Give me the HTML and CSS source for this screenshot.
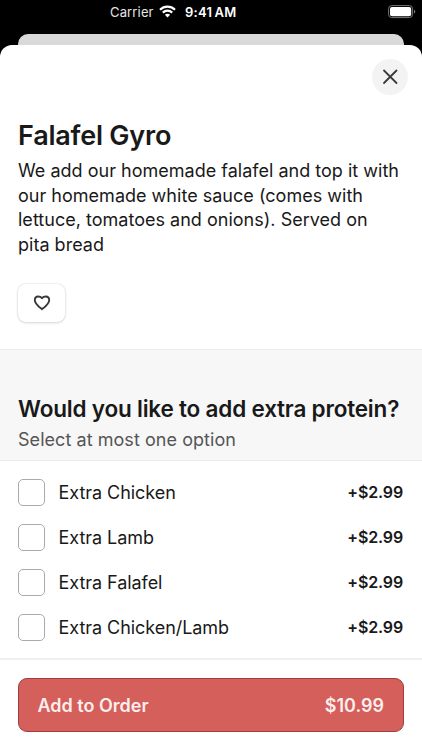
FILE: index.html
```html
<!DOCTYPE html>
<html lang="en">
<head>
<meta charset="utf-8">
<title>Falafel Gyro</title>
<link rel="stylesheet" href="styles.css">
</head>
<body>
<div class="screen">
  <header class="status">
    <span class="carrier">Carrier</span>
    <svg class="wifi" width="17" height="13" viewBox="0 0 17 13" fill="none" stroke="#fff" stroke-width="2.2"><path d="M1 4.8C5.2.6 11.8.6 16 4.8M3.8 7.6c2.7-2.6 6.7-2.6 9.4 0"/><path d="M5.900 9.800c1.500-1.300 3.700-1.300 5.200 0l-2.600 2.700z" fill="#fff" stroke="none"/></svg>
    <span class="time">9:41 AM</span>
    <svg class="battery" width="28" height="14" viewBox="0 0 28 14"><rect x=".6" y=".6" width="24" height="12" rx="3.2" fill="none" stroke="#777"/><rect x="2" y="2" width="21.2" height="9.2" rx="2" fill="#fff"/><path d="M26 4.700c1.800.7 1.800 3.100 0 3.800z" fill="#777"/></svg>
  </header>
  <div class="back-card"></div>
  <main class="sheet">
    <section class="item">
      <button class="close" aria-label="Close"><svg width="36" height="36" viewBox="0 0 36 36" fill="none" stroke="#3a3a3a" stroke-width="1.8" stroke-linecap="round"><path d="M12 11.500l12.500 12.500M24.500 11.500L12 24"/></svg></button>
      <h1>Falafel Gyro</h1>
      <p class="description">We add our homemade falafel and top it with<br>our homemade white sauce (comes with<br>lettuce, tomatoes and onions). Served on<br>pita bread</p>
      <button class="favorite" aria-label="Favorite"><svg width="18" height="16" viewBox="0 0 18 16" fill="none" stroke="#3a3a3a" stroke-width="1.900" stroke-linejoin="round"><path d="M9 14.200C6.100 11.900 1.800 8.900 1.800 5.200C1.800 2.900 3.300 1.500 5.200 1.500C6.900 1.500 8.200 2.200 9 3.200C9.800 2.200 11.100 1.500 12.800 1.500C14.700 1.500 16.200 2.900 16.200 5.200C16.200 8.900 11.900 11.900 9 14.200Z"/></svg></button>
    </section>
    <section class="group">
      <h2>Would you like to add extra protein?</h2>
      <p class="hint">Select at most one option</p>
    </section>
    <section class="options">
      <label class="option"><input type="checkbox"><span class="name">Extra Chicken</span><span class="price">+$2.99</span></label>
      <label class="option"><input type="checkbox"><span class="name">Extra Lamb</span><span class="price">+$2.99</span></label>
      <label class="option"><input type="checkbox"><span class="name">Extra Falafel</span><span class="price">+$2.99</span></label>
      <label class="option"><input type="checkbox"><span class="name">Extra Chicken/Lamb</span><span class="price">+$2.99</span></label>
    </section>
    <footer class="bar">
      <button class="add"><span class="add-label">Add to Order</span><span class="total">$10.99</span></button>
    </footer>
  </main>
</div>
</body>
</html>
```
FILE: styles.css
```css
* { box-sizing: border-box; }
body, h1, h2, p { margin: 0; }
body { background: #000; font-family: Inter, "Liberation Sans", sans-serif; color: #191919; }
button { font: inherit; padding: 0; border: 0; }
span, h1, h2, p { white-space: nowrap; }
.screen { height: 750px; display: flex; flex-direction: column; overflow: hidden; }
.status { height: 34px; flex: none; display: flex; align-items: flex-start; padding: 4px 6px 0 110px; color: #fff; font-size: 13px; line-height: 16px; }
.carrier { width: 49px; letter-spacing: .15px; color: #e6e6e6; }
.wifi { margin-top: 1px; }
.time { margin-left: 9px; font-weight: 600; letter-spacing: .3px; word-spacing: -1.5px; }
.battery { margin-left: auto; margin-top: 1px; }
.back-card { height: 11px; flex: none; margin: 0 18px; border-radius: 10px 10px 0 0; background: #d9d9d9; }
.sheet { height: 705px; flex: none; display: flex; flex-direction: column; border-radius: 12px 12px 0 0; background: #fff; }
.item { height: 304px; padding: 14px 18px 0; display: flex; flex-direction: column; align-items: flex-start; }
.close { width: 36px; height: 36px; border-radius: 50%; background: #f3f3f3; align-self: flex-end; margin-right: -4px; }
.close svg, .favorite svg { display: block; }
h1 { margin-top: 24px; font-size: 27px; line-height: 34px; font-weight: 600; letter-spacing: -.22px; }
.description { margin-top: 6px; font-size: 18px; line-height: 24.7px; letter-spacing: .015px; }
.favorite { width: 47px; height: 38px; margin-top: 26px; border-radius: 8px; background: #fff; box-shadow: 0 0 2px rgba(0,0,0,.16), 0 1px 3px rgba(0,0,0,.12); display: flex; align-items: center; justify-content: center; }
.group { height: 112px; padding: 45px 18px 0; background: #f7f7f7; border-top: 1px solid #ececec; border-bottom: 1px solid #ececec; }
h2 { font-size: 22.5px; line-height: 28px; font-weight: 600; letter-spacing: -.19px; }
.hint { margin-top: 4px; font-size: 18px; line-height: 25px; letter-spacing: .05px; color: #555; }
.options { height: 197px; padding: 9px 19px 0 18px; }
.option { height: 45px; display: flex; align-items: center; }
.option input { appearance: none; width: 27px; height: 27px; margin: 0 13.500px 0 0; border: 1px solid #aaa; border-radius: 5px; background: #fff; }
.name { font-size: 18px; line-height: 24px; letter-spacing: -.05px; }
.price { margin-left: auto; font-size: 16px; font-weight: 600; line-height: 24px; letter-spacing: -.15px; position: relative; top: -1px; }
.bar { height: 92px; padding: 18px 18px; border-top: 2px solid #f0f0f0; }
.add { width: 100%; height: 54px; padding: 0 19px 0 18.500px; display: flex; align-items: center; justify-content: space-between; border: 1px solid #a33c3c; border-radius: 9px; background: #d45f5b; color: #fceeed; font-size: 18px; font-weight: 600; }
```
